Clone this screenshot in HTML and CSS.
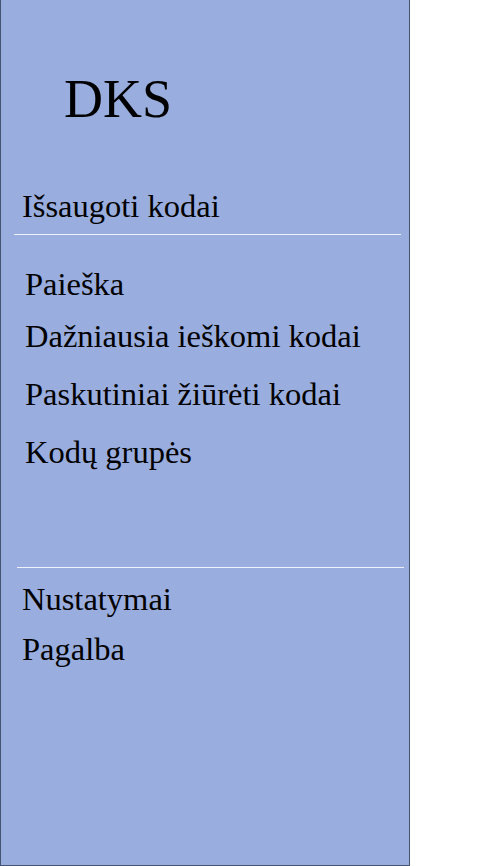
FILE: index.html
```html
<!DOCTYPE html>
<html lang="lt">
<head>
<meta charset="utf-8">
<title>DKS</title>
<link rel="stylesheet" href="styles.css">
</head>
<body>
<aside class="sidebar">
  <div class="logo">DKS</div>
  <div class="saved">Išsaugoti kodai</div>
  <hr class="divider divider-top">
  <nav class="menu">
    <a class="menu-item item-search" href="#">Paieška</a>
    <a class="menu-item item-frequent" href="#">Dažniausia ieškomi kodai</a>
    <a class="menu-item item-recent" href="#">Paskutiniai žiūrėti kodai</a>
    <a class="menu-item item-groups" href="#">Kodų grupės</a>
  </nav>
  <hr class="divider divider-bottom">
  <nav class="footer-menu">
    <a class="footer-item item-settings" href="#">Nustatymai</a>
    <a class="footer-item item-help" href="#">Pagalba</a>
  </nav>
</aside>
</body>
</html>
```
FILE: styles.css
```css
html, body {
  margin: 0;
  padding: 0;
  background: #ffffff;
}

body {
  font-family: "Liberation Serif", "Times New Roman", serif;
  color: #000000;
}

.sidebar {
  box-sizing: border-box;
  width: 410px;
  height: 866px;
  background: #99aede;
  border-left: 1px solid #46556f;
  border-right: 1px solid #46556f;
  border-bottom: 1px solid #46556f;
  display: flex;
  flex-direction: column;
}

.logo {
  font-size: 54px;
  line-height: 60px;
  padding-top: 69px;
  padding-left: 63px;
}

.saved {
  font-size: 32.5px;
  line-height: 40px;
  margin-top: 57px;
  padding-left: 21px;
}

.divider {
  border: 0;
  height: 1px;
  background: #eef1fa;
  margin: 0;
}

.divider-top {
  margin-top: 8px;
  margin-left: 13px;
  width: 387px;
}

.menu {
  display: flex;
  flex-direction: column;
  padding-top: 29px;
  padding-left: 24px;
}

.menu-item,
.footer-item {
  font-size: 32.5px;
  line-height: 40px;
  color: #000000;
  text-decoration: none;
}

.item-frequent { margin-top: 12px; }
.item-recent { margin-top: 18px; }
.item-groups { margin-top: 18px; }

.divider-bottom {
  margin-top: 95px;
  margin-left: 16px;
  width: 387px;
}

.footer-menu {
  display: flex;
  flex-direction: column;
  padding-top: 11px;
  padding-left: 21px;
}

.item-help { margin-top: 10px; }
```
